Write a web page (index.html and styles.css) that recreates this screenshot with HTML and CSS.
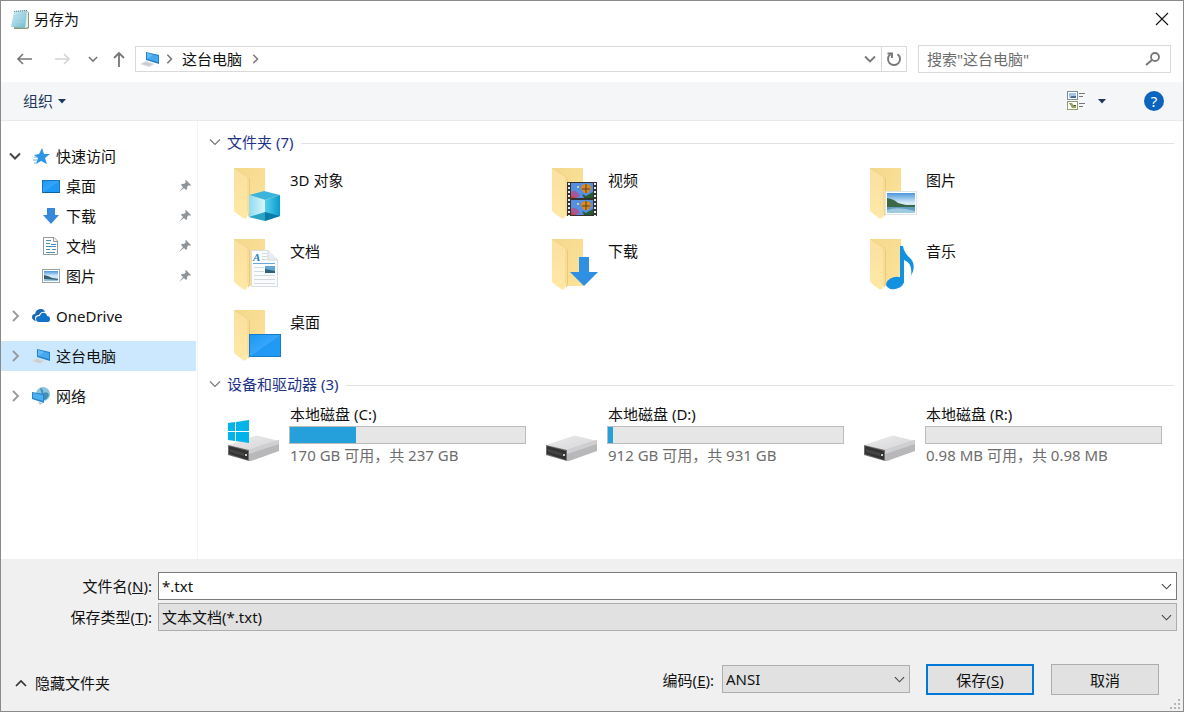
FILE: index.html
```html
<!DOCTYPE html>
<html lang="zh-CN">
<head>
<meta charset="utf-8">
<title>另存为</title>
<link rel="stylesheet" href="styles.css">
</head>
<body>
<svg class="defs" aria-hidden="true">
  <defs>
    <linearGradient id="folder-back" x1="0" y1="0" x2="1" y2="1">
      <stop offset="0" stop-color="#f3d88c"/><stop offset="1" stop-color="#fde39a"/>
    </linearGradient>
    <linearGradient id="folder-flap" x1="0" y1="0" x2="0" y2="1">
      <stop offset="0" stop-color="#fbe0a0"/><stop offset="1" stop-color="#ffe8a6"/>
    </linearGradient>
    <linearGradient id="sky" x1="0" y1="0" x2="0" y2="1">
      <stop offset="0" stop-color="#4a97dc"/><stop offset="0.5" stop-color="#d9edfa"/><stop offset="1" stop-color="#8fc0e0"/>
    </linearGradient>
    <linearGradient id="screen" x1="0" y1="0" x2="1" y2="1">
      <stop offset="0" stop-color="#1c98f2"/><stop offset="0.5" stop-color="#36a6fb"/><stop offset="0.52" stop-color="#1f9af4"/><stop offset="1" stop-color="#2299f6"/>
    </linearGradient>
    <linearGradient id="disk-top" x1="0" y1="0" x2="1" y2="1">
      <stop offset="0" stop-color="#ececed"/><stop offset="1" stop-color="#d4d4d6"/>
    </linearGradient>
    <linearGradient id="paper" x1="0" y1="0" x2="1" y2="1">
      <stop offset="0" stop-color="#d5eef5"/><stop offset="1" stop-color="#6db9d0"/>
    </linearGradient>
    <linearGradient id="cube-left" x1="0" y1="0" x2="1" y2="0">
      <stop offset="0" stop-color="#8fdcf0"/><stop offset="1" stop-color="#d8f5fb"/>
    </linearGradient>
    <linearGradient id="cube-right" x1="0" y1="0" x2="1" y2="0">
      <stop offset="0" stop-color="#58cdea"/><stop offset="1" stop-color="#079ccd"/>
    </linearGradient>
    <symbol id="folder" viewBox="0 0 64 64">
      <path d="M9 6H39V53H12Z" fill="url(#folder-back)"/>
      <path d="M20 14L24 17V51L22 55Z" fill="#ecca78"/>
      <path d="M8 6L22 15Q23 16 23 18V50L20 57L19 56Q18 57 17 56L9 50Q8 49 8 48Z" fill="url(#folder-flap)"/>
      <path d="M8 6L22 15V50" fill="none" stroke="#f3d386"/>
    </symbol>
    <symbol id="disk" viewBox="0 0 64 64">
      <path d="M2 43L29 34Q31 33 33 34L53 39L23 49Z" fill="url(#disk-top)"/>
      <path d="M23 48L53 38V49L25 59H23Z" fill="#b8b8bb"/>
      <path d="M23 48L53 38V42L23 52Z" fill="#cfcfd2"/>
      <path d="M2 43L23 48V59L2 53Z" fill="#6d6d6d"/>
      <path d="M3 44L22 49V58L3 52Z" fill="#333"/>
      <path d="M4 47L18 51V54L4 50Z" fill="#454545"/>
      <rect x="19" y="52" width="2" height="2" fill="#b9d4c1"/>
    </symbol>
    <symbol id="computer" viewBox="0 0 20 20">
      <path d="M0 15L6 12L15 15L9 18Z" fill="#dadde1"/>
      <path d="M2 15L6 13L12 15L9 17Z" fill="#c9ced4"/>
      <path d="M6 3L19 6V15L6 11Z" fill="#2680c8"/>
      <path d="M7 4L18 7V13L7 10Z" fill="#48a9ee"/>
      <path d="M7 4L13 6L7 10Z" fill="#66bbf6"/>
    </symbol>
    <symbol id="pin" viewBox="0 0 14 14">
      <path d="M8 1L13 6L12 7L11 6L9 8Q10 10 8 11L6 9L1 13L5 8L3 6Q4 4 6 5L8 3L7 2Z" fill="#8e9498"/>
    </symbol>
    <symbol id="chev-right" viewBox="0 0 12 12"><path d="M4 1L9 6L4 11" fill="none" stroke="currentColor" stroke-width="1.8"/></symbol>
    <symbol id="chev-down" viewBox="0 0 12 12"><path d="M1 3.5L6 8.5L11 3.5" fill="none" stroke="currentColor" stroke-width="var(--chev, 1.2)"/></symbol>
    <symbol id="caret" viewBox="0 0 8 5"><path d="M0 0H8L4 4.5Z" fill="currentColor"/></symbol>
  </defs>
</svg>

<div class="dialog" role="dialog" aria-labelledby="dialog-title">
  <header class="titlebar">
    <svg class="icon20" viewBox="0 0 20 20" aria-hidden="true">
      <path d="M4 3L18 2L19 4V19L17 20H4Z" fill="#8a9a78"/>
      <path d="M4 2L17 1V18L15 19L1 18Z" fill="url(#paper)"/>
      <path d="M17 2L18 3V18L15 19Z" fill="#e7efe8"/>
      <path d="M4 2.5L17 1.5" stroke="#5c7f8a" stroke-dasharray="1 1"/>
      <path d="M4 7H15M4 10H15M3 13H14" stroke="#a6d8e6" stroke-width=".7"/>
    </svg>
    <h1 id="dialog-title">另存为</h1>
    <button class="close" type="button" aria-label="关闭">
      <svg viewBox="0 0 14 14"><path d="M1 1L13 13M13 1L1 13" stroke="#111" stroke-width="1.1"/></svg>
    </button>
  </header>

  <div class="navbar">
    <button class="nav-back" type="button" aria-label="后退"><svg viewBox="0 0 16 16"><path d="M16 8H2M7 3L2 8L7 13" fill="none" stroke="#777" stroke-width="1.6"/></svg></button>
    <button class="nav-forward" type="button" aria-label="前进"><svg viewBox="0 0 16 16"><path d="M0 8H14M9 3L14 8L9 13" fill="none" stroke="#d4d4d4" stroke-width="1.6"/></svg></button>
    <button class="nav-recent" type="button" aria-label="最近位置"><svg class="bold"><use href="#chev-down"/></svg></button>
    <button class="nav-up" type="button" aria-label="向上"><svg viewBox="0 0 16 16"><path d="M8 16V2M3 7L8 2L13 7" fill="none" stroke="#777" stroke-width="1.8"/></svg></button>
    <div class="address">
      <svg class="icon20" aria-hidden="true"><use href="#computer"/></svg>
      <svg class="crumb-sep" aria-hidden="true"><use href="#chev-right"/></svg>
      <a class="crumb" href="#">这台电脑</a>
      <svg class="crumb-sep" aria-hidden="true"><use href="#chev-right"/></svg>
      <button class="address-drop" type="button" aria-label="历史记录"><svg class="bold"><use href="#chev-down"/></svg></button>
      <button class="refresh" type="button" aria-label="刷新"><svg viewBox="0 0 16 16"><path d="M11.5 3.2A6 6 0 1 1 4.5 3.2" fill="none" stroke="#777" stroke-width="1.9"/><path d="M1.500 2.500H6V7" fill="none" stroke="#777" stroke-width="1.9"/></svg></button>
    </div>
    <label class="search">
      <input type="search" placeholder='搜索"这台电脑"' aria-label="搜索">
      <svg viewBox="0 0 16 16" aria-hidden="true"><circle cx="10" cy="6" r="4" fill="none" stroke="#777" stroke-width="1.8"/><path d="M7 9L1 14" stroke="#777" stroke-width="2"/></svg>
    </label>
  </div>

  <div class="toolbar">
    <button class="organize" type="button">组织 <svg class="caret"><use href="#caret"/></svg></button>
    <button class="view" type="button" aria-label="更改视图">
      <svg class="view-icon" viewBox="0 0 20 20">
        <g fill="#fff"><rect x="1.500" y=".5" width="10" height="8" stroke="#7e8ea0"/><rect x="1.500" y="10.500" width="10" height="8" stroke="#9a9a6e"/></g>
        <path d="M3 2H10V5L7 6L5 5L3 7Z" fill="#a4c6ea"/><path d="M5 5H10V7H4Z" fill="#4b6d92"/>
        <path d="M3 12H6L8 15L10 14V17H6Z" fill="#8ea35d"/><path d="M7 14H10V15H8Z" fill="#42522a"/>
        <path d="M13 2.500H19M13 5.500H17M13 12.500H19M13 15.500H17" stroke="#777"/>
      </svg>
      <svg class="caret"><use href="#caret"/></svg>
    </button>
    <button class="help" type="button" aria-label="帮助">?</button>
  </div>

  <div class="main">
    <nav class="tree" aria-label="导航窗格">
      <ul>
        <li>
          <a class="node" href="#"><svg class="twist open"><use href="#chev-down"/></svg>
            <svg class="icon20" viewBox="0 0 20 20"><path d="M11 2L13 8L19 8L14 12L16 18L10 15L5 18L7 12L3 9L8 8Z" fill="#2d95e3"/><path d="M3 11H6M2 14H6M3 17H5" stroke="#6cb4e9"/></svg>快速访问</a>
          <ul>
            <li><a class="node leaf" href="#"><svg class="icon20" viewBox="0 0 20 20"><rect x="1.500" y="4.500" width="17" height="12" fill="url(#screen)" stroke="#1877bd"/><path d="M2 16.500H18" stroke="#0c5f9d"/></svg>桌面<svg class="pin"><use href="#pin"/></svg></a></li>
            <li><a class="node leaf" href="#"><svg class="icon20" viewBox="0 0 20 20"><path d="M6 2H14V9H18L10 18L2 9H6Z" fill="#3588da"/></svg>下载<svg class="pin"><use href="#pin"/></svg></a></li>
            <li><a class="node leaf" href="#"><svg class="icon20" viewBox="0 0 20 20"><path d="M2.500 1.500H13L16.500 5V18.500H2.500Z" fill="#fff" stroke="#929aa1"/><path d="M12.500 2V5.500H16" fill="none" stroke="#929aa1"/><path d="M5 4.500H10M5 7.500H9M5 10.500H15M5 13.500H9M5 16.500H14M11 13.500H15" stroke="#4a8fb8"/><path d="M10 8.500H15" stroke="#3588da"/></svg>文档<svg class="pin"><use href="#pin"/></svg></a></li>
            <li><a class="node leaf" href="#"><svg class="icon20" viewBox="0 0 20 20"><rect x="1.500" y="3.500" width="17" height="13" fill="#fff" stroke="#9aa3aa"/><rect x="3" y="5" width="14" height="10" fill="url(#sky)"/><path d="M3 9Q8 10 11 12L17 13V14L3 13Z" fill="#365f70"/></svg>图片<svg class="pin"><use href="#pin"/></svg></a></li>
          </ul>
        </li>
        <li><a class="node" href="#"><svg class="twist"><use href="#chev-right"/></svg>
          <svg class="icon20" viewBox="0 0 20 20"><path d="M5 15Q1 14 1 11Q1 8 4 8Q5 3 10 3Q13 3 14 6Q10 5 8 9Q4 9 4 12Q4 14 5 15Z" fill="#1768b8"/><path d="M8 16Q5 16 5 13Q5 10 9 10Q10 6 14 7Q16 8 16 10Q19 10 19 13Q19 16 17 16Z" fill="#1373c8"/></svg>OneDrive</a></li>
        <li><a class="node selected" href="#" aria-current="true"><svg class="twist"><use href="#chev-right"/></svg><svg class="icon20"><use href="#computer"/></svg>这台电脑</a></li>
        <li><a class="node" href="#"><svg class="twist"><use href="#chev-right"/></svg>
          <svg class="icon20" viewBox="0 0 20 20"><circle cx="12" cy="8" r="7" fill="#8ac4df"/><path d="M9 2Q13 3 12 7Q17 5 18 9Q16 14 13 14L11 9Z" fill="#468fb6"/><path d="M1 6L13 8V17L1 13Z" fill="#2384cb"/><path d="M2 7L12 9V15L2 12Z" fill="#4cafef"/><path d="M7 16L12 17L9 19Z" fill="#b8c4cb"/></svg>网络</a></li>
      </ul>
    </nav>

    <section class="files">
      <h2><svg class="group-chev"><use href="#chev-down"/></svg>文件夹 (7)</h2>
      <ul class="tiles">
        <li class="tile"><svg class="big" viewBox="0 0 64 64"><use href="#folder"/><path d="M23 33L38 29L54 33L39 38Z" fill="#3db4dc"/><path d="M23 33L39 38V59L23 55Z" fill="url(#cube-left)"/><path d="M39 38L54 33V54L39 59Z" fill="url(#cube-right)"/><path d="M23 55L39 50V59Z" fill="#2aa3c6"/><path d="M39 50L54 54L39 59Z" fill="#0a7ba6"/></svg><span>3D 对象</span></li>
        <li class="tile"><svg class="big" viewBox="0 0 64 64"><use href="#folder"/>
          <rect x="23" y="20" width="30" height="34" fill="#333"/><rect x="27" y="21" width="22" height="15" fill="#568fe0"/><rect x="27" y="38" width="22" height="15" fill="#568fe0"/>
          <path d="M25 21V54M51 21V54" stroke="#eee" stroke-width="2" stroke-dasharray="2 2"/>
          <g id="balloons"><path d="M27 30Q30 27 34 31L36 34L32 36H27Z" fill="#a45a9a"/><path d="M27 33L32 36H27Z" fill="#d63e34"/><path d="M37 27Q37 22 42 22Q47 22 47 27L44 31H40Z" fill="#e08818"/><path d="M42 22V31M38 27H46" stroke="#54452a"/><path d="M38 32L42 34L49 30V36H40Z" fill="#275b32"/><circle cx="34" cy="25" r="1" fill="#e7ee8b"/></g>
          <use href="#balloons" y="17"/></svg><span>视频</span></li>
        <li class="tile"><svg class="big" viewBox="0 0 64 64"><use href="#folder"/><rect x="23.500" y="29.500" width="31" height="23" fill="#fff" stroke="#dfe4e7"/><rect x="25" y="31" width="28" height="20" fill="url(#sky)"/><path d="M25 36Q32 37 36 41L44 43L53 43V45H25Z" fill="#3c6846"/><path d="M25 45H53V51H25Z" fill="#5f9cbf"/><path d="M25 48Q36 44 53 49V51H25Z" fill="#9ecbe0"/></svg><span>图片</span></li>
        <li class="tile"><svg class="big" viewBox="0 0 64 64"><use href="#folder"/><path d="M25.500 17.500H42L51.500 27V53.500H25.500Z" fill="#fafbfd" stroke="#d9dde2"/><path d="M42 17.500V27H51.500" fill="#e9edf0" stroke="#d3d8dd"/><text class="doc-letter" x="27" y="28">A</text><path d="M36 20.500H41M36 23.500H41M36 26.500H41M28 34.500H38M28 38.500H38M28 42.500H49M28 46.500H49M28 50.500H49" stroke="#d5dae0"/><path d="M27 30.500H49" stroke="#6aa8dc"/><rect x="39" y="33" width="10" height="7" fill="#62a7d4"/><path d="M39 36L49 38V40H39Z" fill="#2f6278"/></svg><span>文档</span></li>
        <li class="tile"><svg class="big" viewBox="0 0 64 64"><use href="#folder"/><path d="M35 24H45V39H54L40 53L26 39H35Z" fill="#2f8fe3"/></svg><span>下载</span></li>
        <li class="tile"><svg class="big" viewBox="0 0 64 64"><use href="#folder"/><ellipse cx="33" cy="50" rx="9" ry="6" transform="rotate(-14 33 50)" fill="#1191e0"/><path d="M38 13H41Q42 20 48 25Q55 32 49 43Q51 30 42 27V50H38Z" fill="#1191e0"/></svg><span>音乐</span></li>
        <li class="tile"><svg class="big" viewBox="0 0 64 64"><use href="#folder"/><rect x="23.500" y="30.500" width="31" height="22" fill="url(#screen)" stroke="#147cca"/></svg><span>桌面</span></li>
      </ul>

      <h2><svg class="group-chev"><use href="#chev-down"/></svg>设备和驱动器 (3)</h2>
      <ul class="tiles">
        <li class="tile drive"><svg class="big" viewBox="0 0 64 64"><use href="#disk"/><path d="M2 21L9 20V29H2ZM10 20L23 18V29H10ZM2 30H9V39L2 38ZM10 30H23V41L10 39Z" fill="#00b4ea"/></svg>
          <div class="drive-info"><span>本地磁盘 (C:)</span><div class="bar"><div class="fill" style="width:28%"></div></div><span class="free">170 GB 可用，共 237 GB</span></div></li>
        <li class="tile drive"><svg class="big"><use href="#disk"/></svg>
          <div class="drive-info"><span>本地磁盘 (D:)</span><div class="bar"><div class="fill" style="width:2%"></div></div><span class="free">912 GB 可用，共 931 GB</span></div></li>
        <li class="tile drive"><svg class="big"><use href="#disk"/></svg>
          <div class="drive-info"><span>本地磁盘 (R:)</span><div class="bar"><div class="fill" style="width:0%"></div></div><span class="free">0.98 MB 可用，共 0.98 MB</span></div></li>
      </ul>
    </section>
  </div>

  <form class="footer">
    <div class="fields">
      <label for="filename">文件名(<u>N</u>):</label>
      <div class="combo"><input id="filename" type="text" value="*.txt"><svg><use href="#chev-down"/></svg></div>
      <label for="filetype">保存类型(<u>T</u>):</label>
      <div class="combo"><select id="filetype"><option>文本文档(*.txt)</option></select><svg><use href="#chev-down"/></svg></div>
    </div>
    <div class="actions">
      <button class="hide-folders" type="button"><svg viewBox="0 0 12 12"><path d="M1 9L6 4L11 9" fill="none" stroke="#333" stroke-width="1.7"/></svg>隐藏文件夹</button>
      <label for="encoding">编码(<u>E</u>):</label>
      <div class="combo encoding"><select id="encoding"><option>ANSI</option></select><svg><use href="#chev-down"/></svg></div>
      <button class="push primary" type="button">保存(<u>S</u>)</button>
      <button class="push" type="button">取消</button>
    </div>
    <svg class="grip" viewBox="0 0 12 12" aria-hidden="true"><path d="M9 1h2v2h-2zM5 5h2v2h-2zM9 5h2v2h-2zM1 9h2v2h-2zM5 9h2v2h-2zM9 9h2v2h-2z" fill="#b4b4b4"/></svg>
  </form>
</div>
</body>
</html>
```
FILE: styles.css
```css
* { box-sizing: border-box; }

body {
  margin: 0;
  font: 15px/20px "Noto Sans", "Noto Sans CJK SC", sans-serif;
  color: #111;
}

button, input, select { font: inherit; color: inherit; }
button { border: 0; padding: 0; background: none; }
ul { list-style: none; margin: 0; padding: 0; }
a { color: inherit; text-decoration: none; }
svg { flex: none; display: block; }
h1, h2 { margin: 0; font: inherit; }

.defs { position: absolute; width: 0; height: 0; }
.icon20 { width: 20px; height: 20px; }
.bold { --chev: 1.8; }

.dialog {
  display: flex;
  flex-direction: column;
  min-height: 100vh;
  border: 1px solid #8a8a8a;
  background: #fff;
}

.titlebar {
  display: flex;
  align-items: center;
  height: 36px;
  padding: 0 14px 0 9px;
  gap: 4px;
}
.close { margin-left: auto; }
.close svg { width: 14px; height: 14px; }

.navbar {
  display: flex;
  align-items: center;
  height: 45px;
  padding: 0 12px 1px 15px;
}
.navbar > button svg { width: 16px; height: 16px; }
.navbar > .nav-recent svg { width: 10px; height: 12px; }
.nav-back { margin-right: 23px; }
.nav-forward { margin-right: 17px; }
.nav-recent { margin-right: 13px; color: #777; }
.nav-up { margin-right: 8px; }

.address {
  flex: 1;
  display: flex;
  align-items: center;
  height: 26px;
  padding-left: 4px;
  border: 1px solid #d9d9d9;
}
.crumb { margin: 0 8px; }
.crumb-sep { width: 10px; height: 10px; color: #777; }
.address .icon20 { margin-right: 4px; }
.address-drop { margin-left: auto; padding: 0 5px; color: #777; }
.address-drop svg { width: 12px; height: 12px; }
.refresh {
  height: 24px;
  padding: 0 4px;
  border-left: 1px solid #d9d9d9;
}
.refresh svg { width: 16px; height: 16px; }

.search {
  display: flex;
  align-items: center;
  width: 253px;
  height: 28px;
  margin-left: 11px;
  padding: 0 9px 0 8px;
  border: 1px solid #d9d9d9;
}
.search input {
  flex: 1;
  min-width: 0;
  padding: 0;
  border: 0;
  outline: 0;
  background: none;
}
.search input::placeholder { color: #6d6d6d; opacity: 1; }
.search svg { width: 16px; height: 16px; }

.toolbar {
  display: flex;
  align-items: center;
  height: 39px;
  padding: 0 19px 0 22px;
  border-bottom: 1px solid #e8eaec;
  background: #f5f6f7;
  color: #1e395b;
}
.toolbar button { display: flex; align-items: center; }
.organize { gap: 5px; }
.caret { width: 8px; height: 5px; }
.view { gap: 12px; margin-left: auto; }
.view-icon { width: 20px; height: 20px; }
.toolbar .help {
  justify-content: center;
  width: 20px;
  height: 20px;
  margin-left: 38px;
  border-radius: 50%;
  background: #0b64bd;
  color: #fff;
}

.main { flex: 1; display: flex; }

.tree {
  width: 197px;
  padding: 20px 1px 0 0;
  border-right: 1px solid #f4f4f4;
}
.tree > ul > li { margin-bottom: 10px; }
.node {
  display: flex;
  align-items: center;
  height: 30px;
  padding: 0 4px 0 8px;
}
.node .icon20 { margin-right: 5px; }
.leaf { padding-left: 40px; }
.twist { width: 12px; height: 12px; margin-right: 10px; color: #999; }
.twist.open { --chev: 2; color: #444; }
.pin { width: 14px; height: 14px; margin-left: auto; }
.selected { background: #cce8ff; }

.files { flex: 1; padding: 10px 9px 0 11px; }
.files h2 {
  display: flex;
  align-items: center;
  height: 22px;
  color: #1e3287;
}
.files h2::after {
  content: "";
  flex: 1;
  height: 1px;
  margin: 2px 0 0 8px;
  background: #e2e2e2;
}
.group-chev { width: 12px; height: 12px; margin-right: 6px; color: #777; }

.tiles {
  display: grid;
  grid-template-columns: repeat(auto-fill, minmax(300px, 1fr));
  column-gap: 16px;
  padding: 7px 10px 0 17px;
}
.tile {
  display: flex;
  height: 71px;
  padding: 2px 2px 0 0;
}
.tile > span { margin-top: 8px; }
.big { width: 64px; height: 64px; }
.doc-letter { font: italic bold 11px "Liberation Serif", serif; fill: #2b7cc4; }
.drive { padding-top: 0; }
.drive-info {
  flex: 1;
  display: flex;
  flex-direction: column;
  padding-top: 2px;
}
.bar {
  height: 18px;
  margin: 2px 0 1px -1px;
  border: 1px solid #bcbcbc;
  background: #e6e6e6;
}
.fill { height: 100%; background: #26a0da; }
.free { color: #6d6d6d; }

.footer {
  position: relative;
  padding: 13px 6px 16px 0;
  background: #f0f0f0;
}
.fields {
  display: grid;
  grid-template-columns: 151px 1fr;
  gap: 3px 6px;
  align-items: center;
}
.fields label { text-align: right; }
.combo { position: relative; }
.combo input, .combo select {
  display: block;
  width: 100%;
  height: 28px;
  padding: 0 24px 0 3px;
  border: 1px solid #adadad;
  border-radius: 0;
  background: #e1e1e1;
  appearance: none;
}
.combo input { border-color: #7a7a7a; background: #fff; }
.combo svg {
  position: absolute;
  top: 9px;
  right: 5px;
  width: 11px;
  height: 11px;
  color: #444;
  pointer-events: none;
}
.actions {
  display: flex;
  align-items: center;
  height: 31px;
  margin-top: 33px;
  padding-right: 18px;
}
.hide-folders {
  display: flex;
  align-items: center;
  align-self: flex-end;
  gap: 8px;
  height: 24px;
  margin: 0 auto 0 14px;
}
.hide-folders svg { width: 12px; height: 12px; }
.encoding { width: 188px; margin: 0 16px 2px 8px; }
.push {
  width: 108px;
  height: 31px;
  border: 1px solid #adadad;
  background: #e1e1e1;
}
.push.primary { margin-right: 17px; border: 2px solid #0078d7; }
.grip { position: absolute; right: 2px; bottom: 1px; width: 12px; height: 12px; }
```
